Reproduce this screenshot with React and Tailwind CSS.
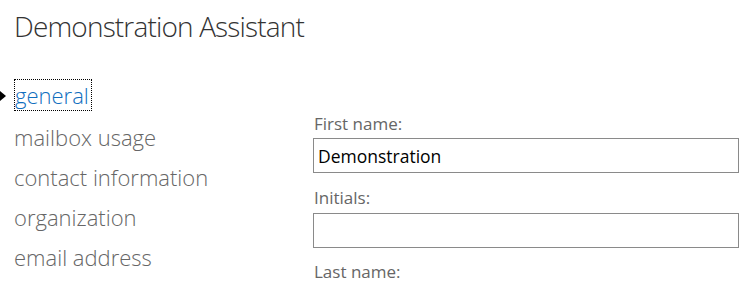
export default function App() {
  const nav = ["general", "mailbox usage", "contact information", "organization", "email address"];

  return (
    <div
      className="w-[754px] h-[281px] bg-white overflow-hidden"
      style={{ fontFamily: '"Open Sans", "Noto Sans", sans-serif' }}
    >
      <h1 className="pl-[14px] pt-[8px] text-[28px] font-light leading-[36px] tracking-[-0.03em] text-[#333]">
        Demonstration Assistant
      </h1>

      <div className="flex mt-[33px]">
        {/* left nav */}
        <ul className="w-[300px] shrink-0 flex flex-col">
          {nav.map((item, i) => (
            <li key={item} className="relative h-[40px] flex items-center pl-[14px]">
              {i === 0 ? (
                <>
                  <span className="absolute left-0 top-[14px] w-0 h-0 border-y-[5px] border-y-transparent border-l-[6px] border-l-black" />
                  <span className="relative top-[-2px] border border-dotted border-black pr-[2px] text-[22px] font-light leading-[30px] text-[#106ebe]">
                    {item}
                  </span>
                </>
              ) : (
                <span className="text-[22px] font-light leading-[30px] text-[#666]">{item}</span>
              )}
            </li>
          ))}
        </ul>

        {/* form */}
        <div className="flex flex-col pt-[36px] pl-[13px] w-[439px]">
          <label className="text-[17px] text-[#666] leading-[22px] pl-[1px]">First name:</label>
          <input
            defaultValue="Demonstration"
            className="mt-[3px] h-[35px] border border-[#8a8a8a] px-[4px] text-[17.5px] text-black outline-none"
          />
          <label className="mt-[14px] text-[17px] text-[#666] leading-[22px] pl-[1px]">Initials:</label>
          <input className="mt-[4px] h-[35px] border border-[#8a8a8a] px-[4px] text-[17.5px] outline-none" />
          <label className="mt-[15px] text-[17px] text-[#666] leading-[18px] pl-[1px]">Last name:</label>
        </div>
      </div>
    </div>
  );
}
